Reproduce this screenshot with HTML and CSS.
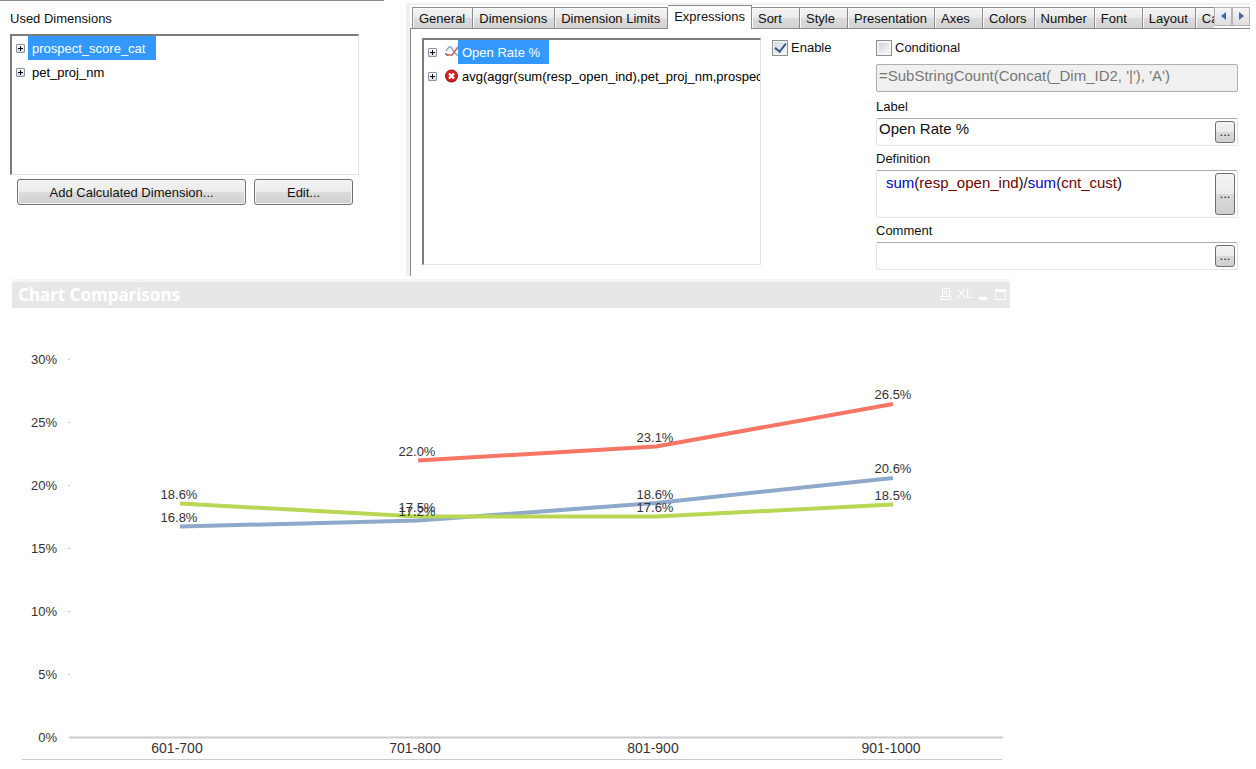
FILE: index.html
```html
<!DOCTYPE html>
<html lang="en">
<head>
<meta charset="utf-8">
<title>Chart Properties</title>
<link rel="stylesheet" href="styles.css">
</head>
<body>
<main class="page">
  <div class="settings">
    <section class="dimensions">
      <h2 class="caption" id="used-title">Used Dimensions</h2>
      <ul class="tree tree-short" aria-labelledby="used-title">
        <li class="row"><button class="expander" aria-label="Expand prospect_score_cat"></button><span class="node selected">prospect_score_cat</span></li>
        <li class="row"><button class="expander" aria-label="Expand pet_proj_nm"></button><span class="node">pet_proj_nm</span></li>
      </ul>
      <div class="actions">
        <button class="btn btn-wide">Add Calculated Dimension...</button>
        <button class="btn btn-small">Edit...</button>
      </div>
    </section>

    <section class="properties">
      <div class="tabbar">
        <div class="tabs" role="tablist">
          <button class="tab" role="tab">General</button>
          <button class="tab" role="tab">Dimensions</button>
          <button class="tab" role="tab">Dimension Limits</button>
          <button class="tab active" role="tab" aria-selected="true">Expressions</button>
          <button class="tab" role="tab">Sort</button>
          <button class="tab" role="tab">Style</button>
          <button class="tab" role="tab">Presentation</button>
          <button class="tab" role="tab">Axes</button>
          <button class="tab" role="tab">Colors</button>
          <button class="tab" role="tab">Number</button>
          <button class="tab" role="tab">Font</button>
          <button class="tab" role="tab">Layout</button>
          <button class="tab" role="tab">Caption</button>
        </div>
        <div class="scrollers">
          <button class="scroller" aria-label="Scroll tabs left"><svg width="5" height="8" viewBox="0 0 5 8"><path d="M5 0v8L0 4z"/></svg></button>
          <button class="scroller" aria-label="Scroll tabs right"><svg width="5" height="8" viewBox="0 0 5 8"><path d="M0 0v8l5-4z"/></svg></button>
        </div>
      </div>
      <div class="panel">
        <ul class="tree tree-tall" aria-label="Expressions">
          <li class="row">
            <button class="expander" aria-label="Expand Open Rate %"></button>
            <svg class="kind" width="13" height="14" viewBox="0 0 13 14" fill="none" stroke-width="1.500"><path stroke="#8fa9ca" d="M1 6l3-4h2l3 5 4 4"/><path stroke="#d0605c" d="M1 10h6l3-4 3-4"/><path stroke="#777" d="M0 8.500L3 10"/></svg>
            <span class="node selected">Open Rate %</span>
          </li>
          <li class="row">
            <button class="expander" aria-label="Expand expression"></button>
            <svg class="kind" width="13" height="14" viewBox="0 0 13 14"><circle cx="6.500" cy="7" r="6.500" fill="#a80f16"/><circle cx="6.500" cy="6.500" r="5.500" fill="#d0252b"/><path d="M4 4.500l5 5M9 4.500l-5 5" stroke="#fff" stroke-width="2.200"/></svg>
            <span class="node">avg(aggr(sum(resp_open_ind),pet_proj_nm,prospect</span>
          </li>
        </ul>
        <label class="check"><input type="checkbox" checked>Enable</label>
        <div class="fields">
          <label class="check"><input type="checkbox">Conditional</label>
          <input class="box condition" type="text" aria-label="Condition" value="=SubStringCount(Concat(_Dim_ID2, '|'), 'A')" disabled>
          <label class="caption" for="label-input">Label</label>
          <div class="box">
            <input class="entry" id="label-input" type="text" value="Open Rate %">
            <button class="more" aria-label="Edit label">...</button>
          </div>
          <span class="caption" id="definition-caption">Definition</span>
          <div class="box box-tall">
            <div class="entry code" role="textbox" contenteditable="true" aria-labelledby="definition-caption"><span class="fn">sum</span>(<span class="field">resp_open_ind</span>)/<span class="fn">sum</span>(<span class="field">cnt_cust</span>)</div>
            <button class="more" aria-label="Edit definition">...</button>
          </div>
          <label class="caption" for="comment-input">Comment</label>
          <div class="box">
            <input class="entry" id="comment-input" type="text">
            <button class="more" aria-label="Edit comment">...</button>
          </div>
        </div>
      </div>
    </section>
  </div>

  <section class="chart">
    <header class="chart-head">
      <h1 class="chart-title">Chart Comparisons</h1>
      <div class="tools">
        <button class="tool" aria-label="Print"><svg width="11" height="12" viewBox="0 0 11 12" fill="none" stroke="#fff"><path d="M2.500 8V.500h7V8M4 3.500h3M4 5.500h4M.500 8.500h10v3H.500z"/></svg></button>
        <button class="tool">XL</button>
        <button class="tool" aria-label="Minimize"><svg width="8" height="12" viewBox="0 0 8 12"><path fill="#fff" d="M0 9h8v3H0z"/></svg></button>
        <button class="tool tool-max" aria-label="Maximize"><svg width="11" height="12" viewBox="0 0 11 12"><path fill="#fff" d="M0 1h11v11H0zm1 3v7h9V4z" fill-rule="evenodd"/></svg></button>
      </div>
    </header>
    <svg class="plot" viewBox="12 308 998 456" role="img" aria-label="Open rate by prospect score category">
      <g fill="#ccc">
        <path d="M68 359h2v1h-2zM68 422h2v1h-2zM68 485h2v1h-2zM68 548h2v1h-2zM68 611h2v1h-2zM68 674h2v1h-2z"/>
        <path d="M69 736.500h934v2H69zM22 759h980v1H22z"/>
      </g>
      <g fill="none" stroke-width="4" stroke-linejoin="round">
        <path stroke="#8fa9ca" d="M180 526.500L418 520.500L656 503L893 478"/>
        <path stroke="#f77565" d="M418 460.500L656 446.500L893 404"/>
        <path stroke="#b9d755" d="M180 503.500L418 516.500H656L893 504.500"/>
      </g>
      <g class="axis-y">
        <text x="57" y="364">30%</text><text x="57" y="427">25%</text><text x="57" y="490">20%</text><text x="57" y="553">15%</text><text x="57" y="616">10%</text><text x="57" y="679">5%</text><text x="57" y="742">0%</text>
      </g>
      <g class="axis-x">
        <text x="177" y="753">601-700</text><text x="415" y="753">701-800</text><text x="653" y="753">801-900</text><text x="891" y="753">901-1000</text>
      </g>
      <g class="values">
        <text x="179" y="499">18.6%</text><text x="179" y="522">16.8%</text>
        <text x="417" y="456">22.0%</text><text x="417" y="512">17.5%</text><text x="417" y="516">17.2%</text>
        <text x="655" y="442">23.1%</text><text x="655" y="499">18.6%</text><text x="655" y="512">17.6%</text>
        <text x="893" y="399">26.5%</text><text x="893" y="473">20.6%</text><text x="893" y="500">18.5%</text>
      </g>
    </svg>
  </section>
</main>
</body>
</html>
```

FILE: styles.css
```css
* { box-sizing: border-box; }
body { margin: 0; background: #fff; color: #111; font: 13px/16px "Liberation Sans", Arial, sans-serif; }
button, input { font: inherit; color: inherit; margin: 0; }
button { padding: 0; }
.page { padding-right: 6px; }
.settings { display: grid; grid-template-columns: 384px minmax(0, 1fr); gap: 22px; padding-bottom: 3px; }
.caption { margin: 0; font-size: 13px; font-weight: 400; line-height: 16px; }

.dimensions { border-top: 1px solid #888; padding: 10px 25px 0 10px; align-self: start; }
.tree { list-style: none; margin: 0; padding: 0; overflow: hidden; border: 1px solid #e2e2e2; border-top: 2px solid #7d7d7d; border-left: 2px solid #7d7d7d; color: #000; }
.tree-short { height: 141px; margin-top: 7px; padding-left: 4px; }
.tree-tall { height: 227px; padding-left: 4px; }
.row { display: flex; align-items: center; height: 24px; white-space: nowrap; }
.node { height: 24px; line-height: 25px; padding: 0 11px 0 4px; }
.selected { background: #39f; color: #fff; }
.expander { flex: none; width: 9px; height: 9px; margin-right: 3px; border: 1px solid #8795a5; border-radius: 1px; background: linear-gradient(#000, #000) center / 5px 1px no-repeat, linear-gradient(#000, #000) center / 1px 5px no-repeat, linear-gradient(#fff, #d5d9de); }
.kind { flex: none; margin-left: 5px; }
.tree-tall .node { padding-right: 9px; }
.actions { display: flex; gap: 8px; padding: 4px 6px 0 7px; }
.btn { height: 26px; padding-top: 1px; border: 1px solid #707070; border-radius: 3px; background: linear-gradient(#f3f3f3, #ebebeb 49%, #dcdcdc 50%, #cfcfcf); box-shadow: inset 0 0 0 1px #f8f8f8; }
.btn-wide { flex: 230; }
.btn-small { flex: 98; }

.properties { margin-top: 3px; border-left: 4px solid #f0f0f0; border-top: 2px solid #f0f0f0; }
.tabbar { display: flex; height: 24px; background: linear-gradient(#888, #888) bottom / 100% 1px no-repeat; }
.tabs { flex: 1; min-width: 0; display: flex; align-items: flex-end; overflow: hidden; padding-left: 2px; }
.tab { flex: none; min-width: 48px; height: 22px; padding: 1px 7px 0 6px; text-align: left; border: 1px solid #898c95; border-left-width: 0; background: linear-gradient(#f3f3f3, #ebebeb 49%, #dcdcdc 50%, #d2d2d2); box-shadow: inset 1px 1px 0 #fafafa; }
.tab:first-child { border-left-width: 1px; }
.tab.active { height: 24px; padding: 0 6px 2px; background: #fff; border-bottom: 0; }
.scrollers { display: flex; flex: none; padding: 2px 0 3px; }
.scroller { width: 18px; border: 1px solid #b5b5b5; background: linear-gradient(#f5f5f5, #dedede); fill: #4a5fb0; display: flex; align-items: center; justify-content: center; padding-bottom: 2px; }
.panel { display: grid; grid-template-columns: 339fr 93px 362fr; gap: 11px; border-left: 1px solid #898c95; padding: 9px 12px 6px 11px; align-items: start; min-height: 247px; }
.panel > .check { margin-top: 2px; }
.check { display: flex; align-items: center; gap: 3px; height: 16px; line-height: 18px; }
.check input { appearance: none; width: 16px; height: 16px; border: 1px solid #8e8f8f; background: linear-gradient(135deg, #cfd3d8, #f8f8f8) center / 10px 10px no-repeat, #f4f4f4; }
.check input:checked { background: linear-gradient(135deg, #d5dae2, #f8f8f8) center / 12px 12px no-repeat, #f4f4f4; display: grid; place-items: center; }
.check input:checked::after { content: ""; width: 5px; height: 9px; border: solid #3c5795; border-width: 0 2px 2px 0; transform: rotate(38deg); margin-bottom: 3px; }
.fields { display: flex; flex-direction: column; padding-top: 2px; min-width: 0; }
.fields .caption { margin: 4px 0 3px; padding-top: 1px; }
.fields .condition + .caption { margin-top: 6px; }
.box { display: flex; width: 100%; height: 28px; border: 1px solid #e2e3ea; border-top-color: #abadb3; border-radius: 2px; background: #fff; padding: 2px; }
.box-tall { height: 48px; }
.condition { margin-top: 8px; border-color: #afafaf; background: #f0f0f0; color: #777; font-size: 15px; padding: 0 2px 6px; }
.entry { flex: 1; min-width: 0; height: 16px; border: 0; padding: 0; background: none; font-size: 15px; line-height: 16px; outline: 0; }
.code { padding: 2px 0 0 7px; height: 20px; white-space: nowrap; }
.fn { color: #0000c8; }
.field { color: #700000; }
.more { flex: none; width: 20px; align-self: stretch; border: 1px solid #707070; border-radius: 3px; background: linear-gradient(#f3f3f3, #ebebeb 49%, #dadada 50%, #cfcfcf); }

.chart { width: calc(100% - 240px); padding-left: 12px; }
.chart-head { display: flex; justify-content: space-between; align-items: center; height: 29px; padding: 0 4px 0 6px; border-top: 3px solid #f5f5f5; background: #e7e7e7; color: #fff; }
.chart-title { margin: 0; font: bold 17px/20px "Noto Sans", sans-serif; }
.tools { display: flex; align-items: center; gap: 6px; padding-bottom: 3px; }
.tool { display: flex; border: 0; background: none; }
.tool-max { margin-left: 2px; }
.plot { display: block; width: 100%; height: auto; fill: #333; font-size: 13px; }
.axis-y { text-anchor: end; }
.axis-x { text-anchor: middle; font-size: 14px; }
.values { text-anchor: middle; }
```
